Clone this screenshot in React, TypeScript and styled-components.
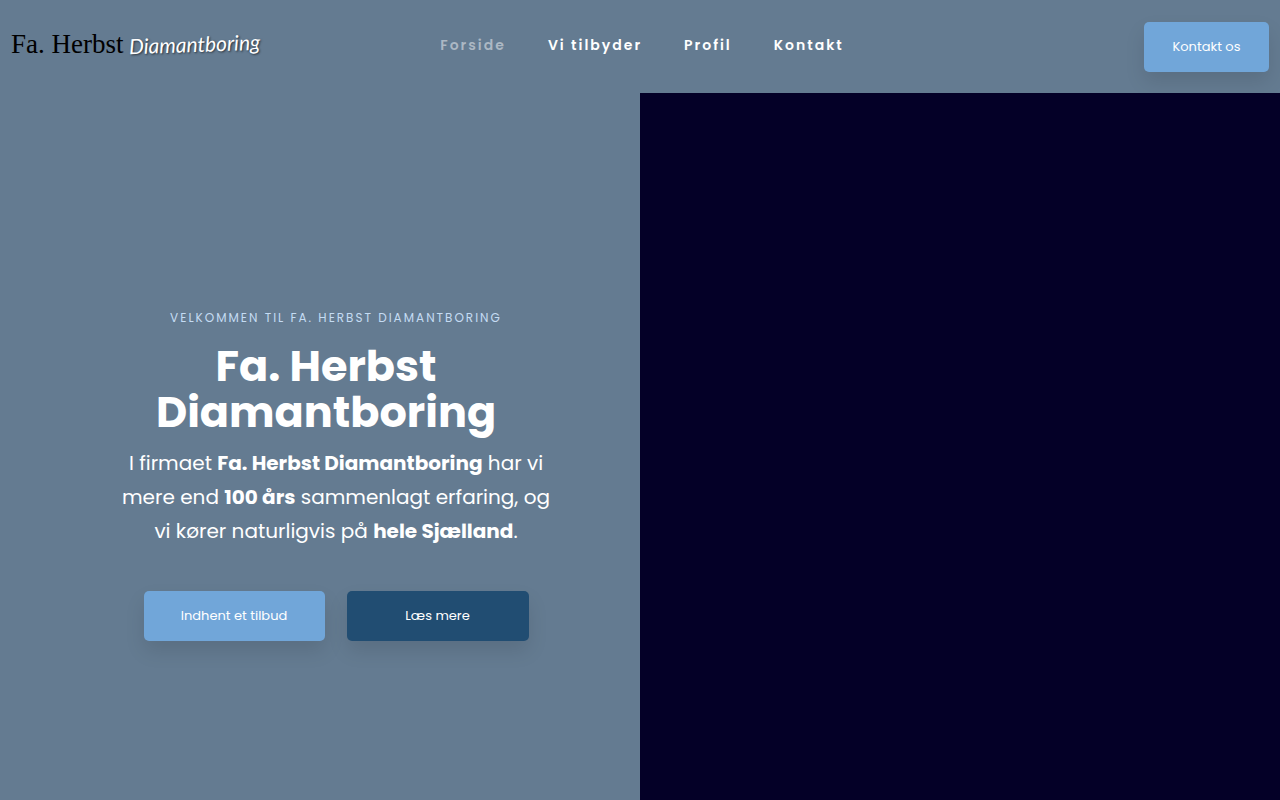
import React from "react";
import styled, { createGlobalStyle } from "styled-components";

const GlobalStyle = createGlobalStyle`
  *, *::before, *::after { box-sizing: border-box; }
  body {
    margin: 0;
    background: #647b91;
    color: #fff;
    font-family: Poppins, Inter, "Open Sans", sans-serif;
  }
`;

const Page = styled.div`
  display: flex;
  flex-direction: column;
  min-height: 100vh;
`;

const Header = styled.header`
  display: grid;
  grid-template-columns: 1fr auto 1fr;
  align-items: center;
  padding: 22px 11px 21px;
`;

const Logo = styled.a`
  display: flex;
  align-items: center;
  gap: 6px;
  padding-bottom: 6px;
  text-decoration: none;
  white-space: nowrap;
`;

const LogoName = styled.span`
  color: #000;
  font: 27px/32px "Liberation Serif", serif;
`;

const LogoScript = styled.span`
  color: #fff;
  font: italic 21px/32px Lato, sans-serif;
  text-shadow: 1px 1px 2px #28323c;
  transform: rotate(-2deg);
`;

const Nav = styled.nav`
  display: flex;
  gap: 42px;
  padding: 0 0 4px 4px;
`;

const NavLink = styled.a<{ $active?: boolean }>`
  color: ${(p) => (p.$active ? "#acb8c4" : "#fff")};
  font-size: 14px;
  font-weight: 600;
  line-height: 24px;
  letter-spacing: 2px;
  text-decoration: none;
  white-space: nowrap;
`;

const Button = styled.button<{ $dark?: boolean; $width: number }>`
  width: ${(p) => p.$width}px;
  height: 50px;
  padding: 0;
  border: 0;
  border-radius: 5px;
  background: ${(p) => (p.$dark ? "#214d72" : "#71a6d9")};
  box-shadow: 0 10px 20px rgba(0, 0, 0, 0.1);
  color: #fff;
  font: inherit;
  font-size: 13px;
  cursor: pointer;
`;

const HeaderAction = styled.div`
  justify-self: end;
  display: flex;
`;

const Hero = styled.main`
  flex: 1;
  display: grid;
  grid-template-columns: 1fr 1fr;
`;

const Intro = styled.section`
  display: flex;
  flex-direction: column;
  align-items: center;
  padding: 215px 64px 64px 96px;
  text-align: center;
`;

const Media = styled.div`
  background: #040027;
`;

const Kicker = styled.p`
  margin: 0;
  color: #c5dcf3;
  font-size: 12px;
  line-height: 20px;
  letter-spacing: 2px;
  text-transform: uppercase;
`;

const Title = styled.h1`
  max-width: 400px;
  margin: 15px 20px 0 0;
  font-size: 43px;
  font-weight: 700;
  line-height: 46px;
`;

const Lead = styled.p`
  max-width: 440px;
  margin: 11px 0 0;
  font-size: 20px;
  line-height: 34px;
`;

const Actions = styled.div`
  display: flex;
  gap: 22px;
  margin-top: 43px;
`;

export default function App() {
  return (
    <Page>
      <GlobalStyle />
      <Header>
        <Logo href="#">
          <LogoName>Fa. Herbst</LogoName>
          <LogoScript>Diamantboring</LogoScript>
        </Logo>
        <Nav>
          <NavLink href="#forside" $active>Forside</NavLink>
          <NavLink href="#tilbyder">Vi tilbyder</NavLink>
          <NavLink href="#profil">Profil</NavLink>
          <NavLink href="#kontakt">Kontakt</NavLink>
        </Nav>
        <HeaderAction>
          <Button $width={125}>Kontakt os</Button>
        </HeaderAction>
      </Header>
      <Hero>
        <Intro>
          <Kicker>Velkommen til Fa. Herbst Diamantboring</Kicker>
          <Title>Fa. Herbst Diamantboring</Title>
          <Lead>
            I firmaet <strong>Fa. Herbst Diamantboring</strong> har vi mere end{" "}
            <strong>100 års</strong> sammenlagt erfaring, og vi kører naturligvis på{" "}
            <strong>hele Sjælland</strong>.
          </Lead>
          <Actions>
            <Button $width={181}>Indhent et tilbud</Button>
            <Button $width={182} $dark>Læs mere</Button>
          </Actions>
        </Intro>
        <Media />
      </Hero>
    </Page>
  );
}
